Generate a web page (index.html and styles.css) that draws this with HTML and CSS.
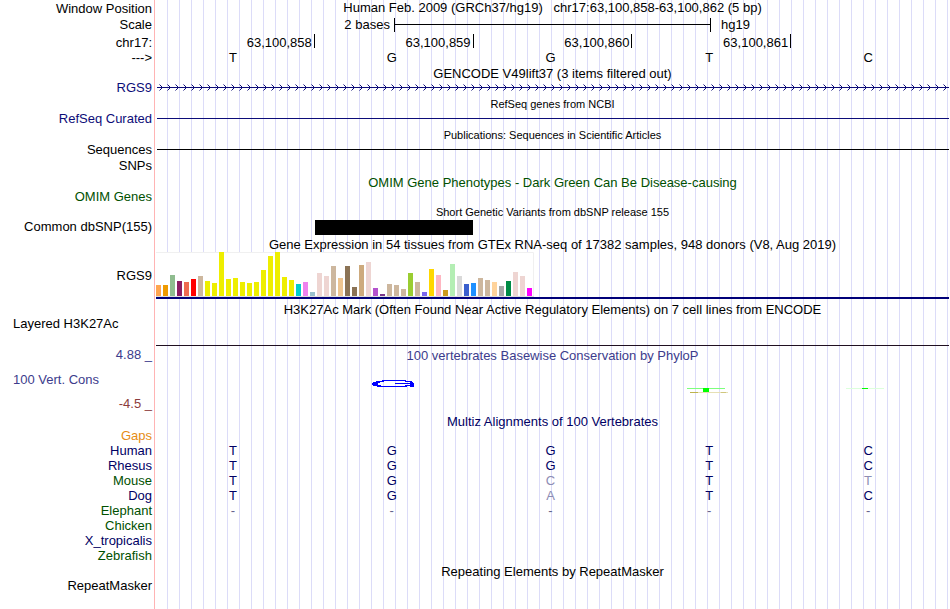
FILE: index.html
```html
<!DOCTYPE html>
<html lang="en">
<head>
    <meta charset="UTF-8">
    <meta name="viewport" content="width=device-width, initial-scale=1.0">
    <title>Human chr17:63,100,858-63,100,862</title>
    <link rel="stylesheet" href="styles.css">
</head>
<body>

<main class="browser">

    <!-- Ruler -->
    <header>
        <div class="row position">
            <span class="label">Window Position</span>
            <h1 class="title">Human Feb. 2009 (GRCh37/hg19) &nbsp; chr17:63,100,858-63,100,862 (5 bp)</h1>
        </div>
        <div class="row scale">
            <span class="label">Scale</span>
            <div class="data scale-data">
                <span class="scale-size">2 bases</span>
                <span class="scale-bar"></span>
                <span class="scale-db">hg19</span>
            </div>
        </div>
        <div class="row coords">
            <span class="label">chr17:</span>
            <div class="data bases">
                <span>63,100,858</span>
                <span>63,100,859</span>
                <span>63,100,860</span>
                <span>63,100,861</span>
                <span></span>
            </div>
        </div>
        <div class="row">
            <span class="label">---&gt;</span>
            <div class="data bases letters">
                <span>T</span>
                <span>G</span>
                <span>G</span>
                <span>T</span>
                <span>C</span>
            </div>
        </div>
    </header>

    <section>
        <h2 class="title">GENCODE V49lift37 (3 items filtered out)</h2>
        <div class="row">
            <span class="label blue">RGS9</span>
            <div class="data">
                <svg class="strand" width="100%" height="7">
                    <defs>
                        <pattern id="arrows" width="8" height="7" patternUnits="userSpaceOnUse">
                            <path d="M2.5 .5l3 3-3 3M0 3.5h8" fill="none" stroke="#0c0c78"/>
                        </pattern>
                    </defs>
                    <rect width="100%" height="7" fill="url(#arrows)"/>
                </svg>
            </div>
        </div>
    </section>

    <section>
        <h2 class="title small">RefSeq genes from NCBI</h2>
        <div class="row">
            <span class="label blue">RefSeq Curated</span>
            <div class="data"><div class="line navy-line"></div></div>
        </div>
    </section>

    <section>
        <h2 class="title small">Publications: Sequences in Scientific Articles</h2>
        <div class="row">
            <span class="label">Sequences</span>
            <div class="data"><div class="line"></div></div>
        </div>
        <div class="row snps">
            <span class="label">SNPs</span>
        </div>
    </section>

    <section>
        <h2 class="title green">OMIM Gene Phenotypes - Dark Green Can Be Disease-causing</h2>
        <div class="row">
            <span class="label green">OMIM Genes</span>
        </div>
    </section>

    <section>
        <h2 class="title small tight">Short Genetic Variants from dbSNP release 155</h2>
        <div class="row">
            <span class="label">Common dbSNP(155)</span>
            <div class="data bases">
                <span></span>
                <span class="variant"></span>
            </div>
        </div>
    </section>

    <section class="expression">
        <h2 class="title">Gene Expression in 54 tissues from GTEx RNA-seq of 17382 samples, 948 donors (V8, Aug 2019)</h2>
        <div class="row">
            <span class="label">RGS9</span>
            <div class="data gtex">
                <svg width="378" height="45">
                    <rect width="378" height="45" fill="#fff"/>
                    <path d="M0 .5h377.5v44" fill="none" stroke="#f0f0f0"/>
                    <path d="M0 44.5h378" stroke="#ddd"/>
                    <rect x="0" y="33" width="5" height="11" fill="#ffa54f"/>
                    <rect x="7" y="33" width="5" height="11" fill="#ee9a00"/>
                    <rect x="14" y="23" width="5" height="21" fill="#8fbc8f"/>
                    <rect x="21" y="29" width="5" height="15" fill="#8b1c62"/>
                    <rect x="28" y="30" width="5" height="14" fill="#ee6a50"/>
                    <rect x="35" y="27" width="5" height="17" fill="#ff0000"/>
                    <rect x="42" y="24" width="5" height="20" fill="#cdb79e"/>
                    <g fill="#eeee00">
                        <rect x="49" y="29" width="5" height="15"/>
                        <rect x="56" y="31" width="5" height="13"/>
                        <rect x="63" y="0" width="5" height="44"/>
                        <rect x="70" y="27" width="5" height="17"/>
                        <rect x="77" y="26" width="5" height="18"/>
                        <rect x="84" y="30" width="5" height="14"/>
                        <rect x="91" y="31" width="5" height="13"/>
                        <rect x="98" y="30" width="5" height="14"/>
                        <rect x="105" y="18" width="5" height="26"/>
                        <rect x="112" y="4" width="5" height="40"/>
                        <rect x="119" y="0" width="5" height="44"/>
                        <rect x="126" y="25" width="5" height="19"/>
                        <rect x="133" y="28" width="5" height="16"/>
                    </g>
                    <rect x="140" y="32" width="5" height="12" fill="#00cdcd"/>
                    <rect x="147" y="30" width="5" height="14" fill="#ee82ee"/>
                    <rect x="154" y="40" width="5" height="4" fill="#9ac0cd"/>
                    <rect x="161" y="21" width="5" height="23" fill="#eed5d2"/>
                    <rect x="168" y="24" width="5" height="20" fill="#eed5d2"/>
                    <rect x="175" y="14" width="5" height="30" fill="#cdb79e"/>
                    <rect x="182" y="26" width="5" height="18" fill="#eec591"/>
                    <rect x="189" y="14" width="5" height="30" fill="#8b7355"/>
                    <rect x="196" y="35" width="5" height="9" fill="#8b7355"/>
                    <rect x="203" y="13" width="5" height="31" fill="#cdaa7d"/>
                    <rect x="210" y="10" width="5" height="34" fill="#eed5d2"/>
                    <rect x="217" y="36" width="5" height="8" fill="#b452cd"/>
                    <rect x="224" y="42" width="5" height="2" fill="#7a378b"/>
                    <rect x="231" y="32" width="5" height="12" fill="#cdb79e"/>
                    <rect x="238" y="33" width="5" height="11" fill="#cdb79e"/>
                    <rect x="245" y="37" width="5" height="7" fill="#cdb79e"/>
                    <rect x="252" y="21" width="5" height="23" fill="#9acd32"/>
                    <rect x="259" y="30" width="5" height="14" fill="#cdb79e"/>
                    <rect x="266" y="40" width="5" height="4" fill="#7a67ee"/>
                    <rect x="273" y="17" width="5" height="27" fill="#ffd700"/>
                    <rect x="280" y="23" width="5" height="21" fill="#ffb6c1"/>
                    <rect x="287" y="38" width="5" height="6" fill="#cd9b1d"/>
                    <rect x="294" y="12" width="5" height="32" fill="#b4eeb4"/>
                    <rect x="301" y="24" width="5" height="20" fill="#d9d9d9"/>
                    <rect x="308" y="32" width="5" height="12" fill="#3a5fcd"/>
                    <rect x="315" y="31" width="5" height="13" fill="#1e90ff"/>
                    <rect x="322" y="26" width="5" height="18" fill="#cdb79e"/>
                    <rect x="329" y="28" width="5" height="16" fill="#cdb79e"/>
                    <rect x="336" y="30" width="5" height="14" fill="#ffd39b"/>
                    <rect x="343" y="34" width="5" height="10" fill="#a6a6a6"/>
                    <rect x="350" y="29" width="5" height="15" fill="#008b45"/>
                    <rect x="357" y="20" width="5" height="24" fill="#eed5d2"/>
                    <rect x="364" y="24" width="5" height="20" fill="#eed5d2"/>
                    <rect x="371" y="36" width="5" height="8" fill="#ff00ff"/>
                </svg>
            </div>
        </div>
    </section>

    <section class="histone">
        <h2 class="title tight">H3K27Ac Mark (Often Found Near Active Regulatory Elements) on 7 cell lines from ENCODE</h2>
        <div class="row">
            <span class="label left">Layered H3K27Ac</span>
            <div class="data signal"></div>
        </div>
    </section>

    <section class="row conservation">
        <div class="axis">
            <span class="label indigo">4.88 _</span>
            <span class="label left indigo">100 Vert. Cons</span>
            <span class="label maroon">-4.5 _</span>
        </div>
        <div>
            <h2 class="title tight indigo">100 vertebrates Basewise Conservation by PhyloP</h2>
            <div class="data bases logos">
                <span></span>
                <span>
                    <svg width="52" height="14" shape-rendering="crispEdges">
                        <path d="M47 2C42 0 32 0 26 0C14 0 5 1 5 4S14 7 26 7C33 7 40 7 43 6V5C38 6 32 6 26 6C17 6 11 6 11 4S17 1 26 1C34 1 40 1 45 3Z" fill="#00f"/>
                        <path d="M28 3h19v4h-4v-3h-15z" fill="#00f"/>
                    </svg>
                </span>
                <span></span>
                <span>
                    <svg width="52" height="14" shape-rendering="crispEdges">
                        <rect x="2" y="8" width="38" height="1" fill="#7dff7d"/>
                        <rect x="18" y="8" width="6" height="4" fill="#0f0"/>
                        <rect x="5" y="12" width="38" height="1" fill="#e6e0b4"/>
                        <rect x="5" y="12" width="8" height="1" fill="#bdb34c"/>
                        <rect x="36" y="12" width="5" height="1" fill="#cfc67c"/>
                    </svg>
                </span>
                <span>
                    <svg width="52" height="14" shape-rendering="crispEdges">
                        <rect x="2" y="8" width="38" height="1" fill="#dcffdc"/>
                        <rect x="18" y="8" width="6" height="1" fill="#0f0"/>
                    </svg>
                </span>
            </div>
        </div>
    </section>

    <section class="multiz">
        <h2 class="title navy">Multiz Alignments of 100 Vertebrates</h2>
        <table class="alignment">
            <tr><th class="orange" scope="row">Gaps</th><td></td><td></td><td></td><td></td><td></td></tr>
            <tr><th scope="row">Human</th><td>T</td><td>G</td><td>G</td><td>T</td><td>C</td></tr>
            <tr><th scope="row">Rhesus</th><td>T</td><td>G</td><td>G</td><td>T</td><td>C</td></tr>
            <tr><th class="green" scope="row">Mouse</th><td>T</td><td>G</td><td class="diff">C</td><td>T</td><td class="diff">T</td></tr>
            <tr><th scope="row">Dog</th><td>T</td><td>G</td><td class="diff">A</td><td>T</td><td>C</td></tr>
            <tr class="gap"><th class="green" scope="row">Elephant</th><td>-</td><td>-</td><td>-</td><td>-</td><td>-</td></tr>
            <tr><th class="green" scope="row">Chicken</th><td></td><td></td><td></td><td></td><td></td></tr>
            <tr><th scope="row">X_tropicalis</th><td></td><td></td><td></td><td></td><td></td></tr>
            <tr><th class="green" scope="row">Zebrafish</th><td></td><td></td><td></td><td></td><td></td></tr>
        </table>
    </section>

    <section>
        <h2 class="title">Repeating Elements by RepeatMasker</h2>
        <div class="row">
            <span class="label">RepeatMasker</span>
        </div>
    </section>

</main>

</body>
</html>
```

FILE: styles.css
```css
* {
    box-sizing: border-box;
}
body {
    margin: 0;
    background-color: #fff;
    color: #000;
    font-family: "Liberation Sans", Arial, Helvetica, sans-serif;
    font-size: 13px;
    line-height: 15px;
}

/* red divider and the blue guide lines run behind every track */
.browser {
    min-height: 100vh;
    background-image:
        linear-gradient(#ffb4b4, #ffb4b4),
        repeating-linear-gradient(to right, transparent 0 11px, #dcdcf8 11px 12px);
    background-position: 154px 0, 156px 0;
    background-size: 1px 100%, 100% 100%;
    background-repeat: no-repeat;
}
.row {
    display: grid;
    grid-template-columns: 155px 1fr;
    min-height: 15px;
}
.label {
    padding-right: 3px;
    text-align: right;
}
section .label {
    line-height: 13px;
}
.label.left {
    padding-left: 13px;
    text-align: left;
}
.title {
    height: 16px;
    margin: 0 0 0 155px;
    font-size: 13px;
    font-weight: normal;
    line-height: 18px;
    text-align: center;
    white-space: nowrap;
}
.row .title {
    margin-left: 0;
}
.title.small {
    font-size: 11px;
    line-height: 16px;
}
.title.tight {
    height: 15px;
    line-height: 15px;
}
.data {
    padding-right: 1px;
}
.bases {
    display: grid;
    grid-template-columns: repeat(5, 1fr);
}

/* ruler */
.position {
    height: 16px;
}
.position .label {
    line-height: 17px;
}
.position .title {
    line-height: 16px;
}
.scale {
    height: 18px;
    line-height: 18px;
}
.scale-data {
    display: grid;
    grid-template-columns: 30% 40% 30%;
    padding-left: 1px;
}
.scale-size {
    padding-right: 4px;
    text-align: right;
}
.scale-bar {
    height: 14px;
    margin-top: 2px;
    border: solid #000;
    border-width: 0 1px;
    background: linear-gradient(#000, #000) 0 6px / 100% 1px no-repeat;
}
.scale-db {
    padding-left: 10px;
}
.coords {
    height: 16px;
    line-height: 17px;
}
.coords .bases span {
    height: 14px;
    padding-right: 2px;
    text-align: right;
}
.coords .bases span + span {
    border-left: 1px solid #000;
}
.letters span {
    padding-right: 3px;
    text-align: center;
}

/* tracks */
.line {
    height: 1px;
    margin: 6px 0 0 2px;
    background-color: #000;
}
.navy-line {
    background-color: #0c0c78;
}
.strand {
    display: block;
    margin-top: 3px;
    padding-left: 2px;
}
.snps {
    height: 16px;
}
.snps .label {
    line-height: 16px;
}
.variant {
    margin-left: 1px;
    background-color: #000;
}
.expression {
    padding-top: 1px;
}
.expression .row {
    align-items: center;
}
.gtex {
    margin: 0 1px;
    border-bottom: 2px solid #000078;
}
.gtex svg {
    display: block;
}
.histone {
    padding-top: 3px;
}
.signal {
    height: 29px;
    margin: 0 1px;
    border-bottom: 1px solid #201020;
}
.conservation {
    height: 68px;
    padding-top: 2px;
}
.axis {
    display: flex;
    flex-direction: column;
    justify-content: space-between;
    padding-bottom: 4px;
}
.logos {
    padding-top: 17px;
}
.logos span {
    display: flex;
    justify-content: center;
}
.multiz .title {
    height: 14px;
    line-height: 16px;
}
.alignment {
    width: calc(100% - 1px);
    table-layout: fixed;
    border-collapse: collapse;
    color: #000064;
}
.alignment th {
    width: 155px;
    padding: 0 3px 0 0;
    font-weight: normal;
    text-align: right;
}
.alignment td {
    height: 15px;
    padding: 0 3px 0 0;
    text-align: center;
}
.alignment .diff {
    color: #8c8cb4;
}
.alignment .gap td {
    color: #64648c;
}

/* track colours */
.blue {
    color: #0c0c78;
}
.navy {
    color: #000064;
}
.green,
.alignment .green {
    color: #005000;
}
.indigo {
    color: #3c3c8c;
}
.maroon {
    color: #8c3c3c;
}
.alignment .orange {
    color: #e68c14;
}
```
